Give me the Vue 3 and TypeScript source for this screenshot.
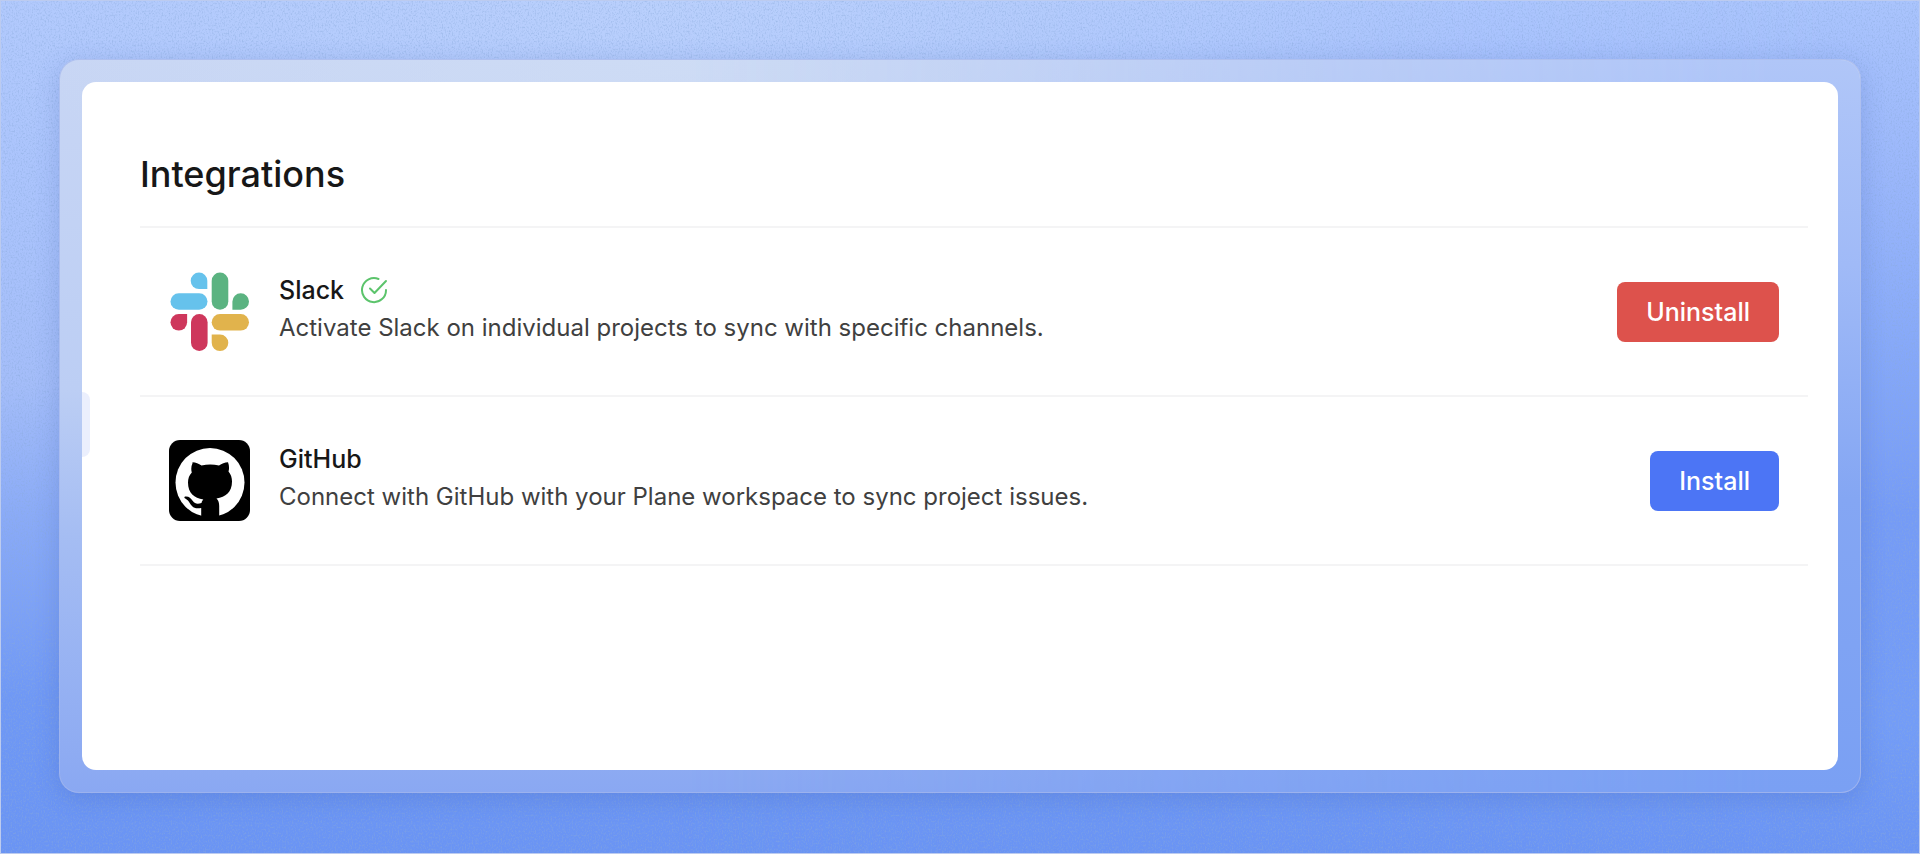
<script setup lang="ts">
interface Integration {
  id: 'slack' | 'github'
  name: string
  description: string
  installed: boolean
}

const integrations: Integration[] = [
  {
    id: 'slack',
    name: 'Slack',
    description: 'Activate Slack on individual projects to sync with specific channels.',
    installed: true,
  },
  {
    id: 'github',
    name: 'GitHub',
    description: 'Connect with GitHub with your Plane workspace to sync project issues.',
    installed: false,
  },
]
</script>

<template>
  <div class="backdrop">
    <svg class="grain" aria-hidden="true">
      <filter id="grain-filter" x="0" y="0" width="100%" height="100%">
        <feTurbulence type="fractalNoise" baseFrequency="0.7 0.5" numOctaves="2" seed="4" />
        <feColorMatrix values="0 0 0 0 0.25  0 0 0 0 0.4  0 0 0 0 0.7  1.3 0 0 0 -0.6" />
      </filter>
      <rect width="100%" height="100%" filter="url(#grain-filter)" />
    </svg>
    <div class="frame">
      <main class="panel">
        <span class="handle"></span>
        <h1>Integrations</h1>
        <ul>
          <li v-for="item in integrations" :key="item.id">
            <svg v-if="item.id === 'slack'" class="logo" viewBox="0 0 82 82" aria-hidden="true">
              <path fill="#66c2ec" d="M30 1.500a8.300 8.300 0 1 0 0 16.600h8.300V9.800A8.300 8.300 0 0 0 30 1.500Z" />
              <rect fill="#66c2ec" x="1.500" y="22.200" width="37" height="16.600" rx="8.300" />
              <rect fill="#5bb381" x="42.700" y="1.500" width="16.600" height="37.300" rx="8.300" />
              <path fill="#5bb381" d="M63.400 38.800h8.300a8.300 8.300 0 1 0-8.300-8.300Z" />
              <path fill="#ce375c" d="M18.100 43H9.800a8.300 8.300 0 1 0 8.300 8.300Z" />
              <rect fill="#ce375c" x="22" y="43" width="16.600" height="37" rx="8.300" />
              <rect fill="#e1b34c" x="42.700" y="43" width="37.300" height="16.600" rx="8.300" />
              <path fill="#e1b34c" d="M42.700 63.500v8.300a8.300 8.300 0 1 0 8.300-8.300Z" />
            </svg>
            <svg v-else class="logo" viewBox="0 0 82 82" aria-hidden="true">
              <rect width="81" height="81" rx="11" />
              <circle cx="41" cy="42.500" r="34.500" fill="#fff" />
              <path d="M23.500 22.200c3.200.2 6.200 1.600 9 3.300a36 36 0 0 1 17.500 0c2.800-1.700 5.800-3.100 9-3.300 1.300 3.300 1.300 6.600.5 9.400 2.400 2.700 3.500 6 3.500 10 0 11-6.500 15.500-15.500 17 2 2 2.700 4 2.700 7.500v10L49.500 81H33l-.8-5v-8c-8 1.600-9.700-2.500-12.300-6.300-1.200-1.800-2.500-2.600-4-3.500-.9-.6-.6-1.600.8-1.700 3.300-.2 5.200 2 7.100 4.500 2.200 2.800 4.500 3.300 8.700 2 .3-1.600 1-2.500 1.800-3.400-9-1.500-15.300-6-15.300-17 0-4 1.200-7.300 3.800-10-.8-2.800-.8-6.100.7-9.400Z" />
            </svg>
            <div class="info">
              <h2>
                {{ item.name }}
                <svg v-if="item.installed" class="check" viewBox="0 0 28 28" role="img" aria-label="Installed">
                  <path d="M18.500 3A12 12 0 1 0 26 14" />
                  <path d="m10 12.500 4.500 4.500L26 5" />
                </svg>
              </h2>
              <p>{{ item.description }}</p>
            </div>
            <button type="button" :class="{ danger: item.installed }">
              {{ item.installed ? 'Uninstall' : 'Install' }}
            </button>
          </li>
        </ul>
      </main>
    </div>
  </div>
</template>

<style>
body {
  margin: 0;
}
</style>

<style scoped>
.backdrop {
  position: relative;
  display: flex;
  box-sizing: border-box;
  min-height: 100vh;
  padding: 58px 58px 60px;
  border: 1px solid #bccbef;
  font-family: Inter, "Liberation Sans", sans-serif;
  background: linear-gradient(180deg, #b0c8fd 0%, #aac3fc 25%, #a4bdf9 45%, #8babf7 60%, #6f98f5 82%, #6a94f4 100%);
}

/* The right side reaches the deep blue higher up than the left side. */
.backdrop::before,
.frame::before {
  content: "";
  position: absolute;
  inset: 0;
  mask-image: linear-gradient(to right, transparent 35%, #000 95%);
}

.backdrop::before {
  background: linear-gradient(180deg, #aac4fd 0%, #9bb7fb 20%, #87a9f9 40%, #759bf6 60%, #739cf7 85%, #6a94f4 100%);
}

.backdrop::after {
  content: "";
  position: absolute;
  inset: 0;
  background: radial-gradient(ellipse 42% 30% at 35% 0%, rgba(192, 213, 252, 0.6), transparent);
}

.grain {
  position: absolute;
  inset: 0;
  z-index: 1;
  width: 100%;
  height: 100%;
}

.frame {
  position: relative;
  z-index: 2;
  display: flex;
  flex: 1;
  padding: 22px;
  border: 1px solid rgba(164, 182, 236, 0.7);
  border-radius: 20px;
  background:
    radial-gradient(ellipse 36% 30% at 35% 0%, rgba(207, 221, 245, 0.8), transparent),
    linear-gradient(180deg, #c8d6f4 0%, #bccef4 45%, #a5bdf3 65%, #8aa8f2 100%);
  background-origin: border-box;
  box-shadow: 0 5px 24px rgba(50, 80, 170, 0.22);
}

.frame::before {
  border-radius: 19px;
  background: linear-gradient(180deg, #b0c6f8 0%, #a0baf7 28%, #84a6f3 60%, #7aa0f3 100%);
}

.panel {
  position: relative;
  flex: 1;
  padding: 68px 30px 60px 58px;
  border-radius: 14px;
  background: #fff;
}

.handle {
  position: absolute;
  top: 310px;
  left: 0;
  width: 8px;
  height: 65px;
  border-radius: 0 8px 8px 0;
  background: #ebeffd;
}

h1 {
  margin: 0;
  padding-bottom: 28px;
  border-bottom: 2px solid #f4f4f5;
  color: #171717;
  font-size: 36px;
  font-weight: 500;
  line-height: 48px;
}

ul {
  margin: 0;
  padding: 0;
  list-style: none;
}

li {
  display: flex;
  align-items: center;
  gap: 28px;
  padding: 43px 29px 42px;
  border-bottom: 2px solid #f4f4f5;
}

.logo {
  flex: none;
  width: 82px;
  height: 82px;
}

.info {
  flex: 1;
  padding-bottom: 6px;
}

h2 {
  display: flex;
  align-items: center;
  gap: 16px;
  margin: 0;
  color: #171717;
  font-size: 25px;
  font-weight: 500;
  line-height: 38px;
}

.check {
  width: 28px;
  height: 28px;
  fill: none;
  stroke: #5cc46c;
  stroke-width: 2;
  stroke-linecap: round;
  stroke-linejoin: round;
}

p {
  margin: 0;
  color: #404040;
  font-size: 24px;
  font-weight: 400;
  line-height: 38px;
}

button {
  padding: 11px 29px;
  border: 0;
  border-radius: 8px;
  background: #4c75f5;
  color: #fff;
  font-family: inherit;
  font-size: 25px;
  font-weight: 500;
  line-height: 38px;
}

button.danger {
  background: #dd524c;
}
</style>
